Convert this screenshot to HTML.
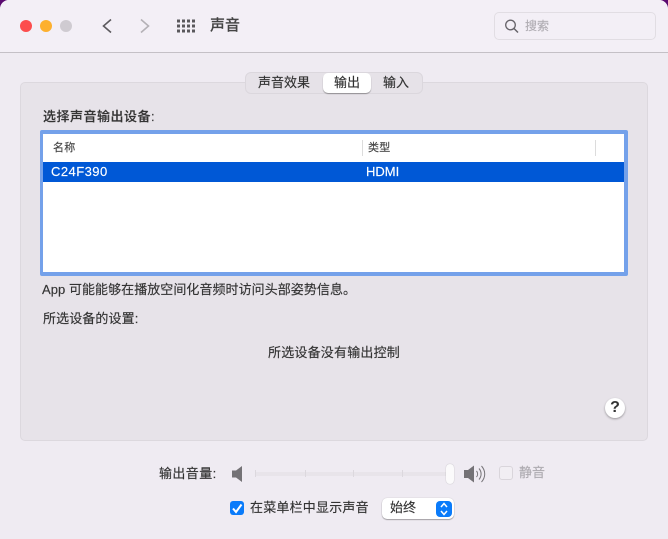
<!DOCTYPE html>
<html lang="zh"><head><meta charset="utf-8">
<style>
html,body{margin:0;padding:0;width:668px;height:539px;overflow:hidden;background:#5a0a70}
body{position:relative;font-family:"Liberation Sans","Noto Sans CJK SC",sans-serif;color:#2a2a2a}
#win{position:absolute;left:0;top:0;width:668px;height:539px;background:#efebf2;border-radius:9px 9px 0 0;overflow:hidden}
.t{position:absolute;white-space:nowrap;font-size:13px;line-height:18px;letter-spacing:.2px;-webkit-text-stroke:.15px currentColor}
#bar{position:absolute;left:0;top:0;width:668px;height:52px;background:#f3eff6;border-bottom:1px solid #c4c0c6}
.dot{position:absolute;top:20px;width:12px;height:12px;border-radius:50%}
#panel{position:absolute;left:20px;top:82px;width:626px;height:357px;background:#e7e3e9;border:1px solid #dcd8de;border-radius:5px}
#tabs{position:absolute;left:245px;top:72px;width:176px;height:20px;background:#e6e2e8;border:1px solid #dbd7dd;border-radius:6px}
#tabon{position:absolute;left:323px;top:73px;width:48px;height:20px;background:#fff;border-radius:5px;box-shadow:0 1px 1px rgba(0,0,0,.35)}
#list{position:absolute;left:40px;top:130px;width:581px;height:138px;background:#fff;border-style:solid;border-color:#74a1ea;border-radius:2px;border-width:4px 4px 4px 3px}
#row{position:absolute;left:43px;top:162px;width:581px;height:20px;background:#0058d6}
.sep{position:absolute;top:140px;width:1px;height:16px;background:#dcdcdc}
#help{position:absolute;left:605px;top:398px;width:20px;height:20px;background:#fff;border-radius:50%;box-shadow:0 1px 2px rgba(0,0,0,.35);text-align:center;font-size:16px;line-height:20px;font-weight:bold;color:#333}
#track{position:absolute;left:255px;top:472px;width:195px;height:4px;background:#e8e4ea;border-radius:2px}
.tick{position:absolute;top:470px;width:1px;height:7px;background:#dcd8de}
#knob{position:absolute;left:446px;top:464px;width:8px;height:20px;background:#fbfafb;border-radius:4px;box-shadow:0 0 1px rgba(0,0,0,.3)}
#mute{position:absolute;left:499px;top:466px;width:12px;height:12px;background:#f1eef3;border:1px solid #d9d5db;border-radius:3px}
#chk{position:absolute;left:230px;top:501px;width:14px;height:14px;background:#0a7bfa;border-radius:3px}
#sel{position:absolute;left:382px;top:498px;width:72px;height:21px;background:#fff;border-radius:5px;box-shadow:0 1px 1px rgba(0,0,0,.3),0 0 1px rgba(0,0,0,.25)}
#selb{position:absolute;left:436px;top:501px;width:16px;height:16px;background:#0a7bfa;border-radius:4px}
#search{position:absolute;left:494px;top:12px;width:160px;height:26px;border:1px solid #e1dde3;border-radius:5px}
svg{position:absolute;overflow:visible}
</style></head><body>
<div id="win">
<div id="bar"></div>
<div class="dot" style="left:20px;background:#fc4d4d;border:0"></div>
<div class="dot" style="left:40px;background:#fdb02e"></div>
<div class="dot" style="left:60px;background:#cfcbd1"></div>
<svg style="left:0;top:0" width="240" height="52" fill="none">
<path d="M111 19.500L103.500 26L111 32.500" stroke="#5c5a5e" stroke-width="1.600"/>
<path d="M141 19.500L148.500 26L141 32.500" stroke="#b4b1b6" stroke-width="1.600"/>
<g fill="#5a585c">
<rect x="177" y="19.500" width="3" height="3"/><rect x="182" y="19.500" width="3" height="3"/><rect x="187" y="19.500" width="3" height="3"/><rect x="192" y="19.500" width="3" height="3"/>
<rect x="177" y="24.500" width="3" height="3"/><rect x="182" y="24.500" width="3" height="3"/><rect x="187" y="24.500" width="3" height="3"/><rect x="192" y="24.500" width="3" height="3"/>
<rect x="177" y="29.500" width="3" height="3"/><rect x="182" y="29.500" width="3" height="3"/><rect x="187" y="29.500" width="3" height="3"/><rect x="192" y="29.500" width="3" height="3"/>
</g></svg>
<div class="t" style="left:210px;top:16px;font-size:15px;line-height:20px;font-weight:500;color:#444;letter-spacing:0">声音</div>
<div id="search"></div>
<svg style="left:0;top:0" width="668" height="52" fill="none"><circle cx="510.500" cy="25" r="4.800" stroke="#67646a" stroke-width="1.300"/><path d="M514 28.500L518 32.500" stroke="#67646a" stroke-width="1.500"/></svg>
<div class="t" style="left:525px;top:17px;color:#b0adb3;font-size:12px;letter-spacing:0">搜索</div>

<div id="panel"></div>
<div id="tabs"></div>
<div id="tabon"></div>
<div class="t" style="left:258px;top:74px;color:#333;letter-spacing:0">声音效果</div>
<div class="t" style="left:334px;top:74px;color:#333;letter-spacing:0">输出</div>
<div class="t" style="left:383px;top:74px;color:#333;letter-spacing:0">输入</div>

<div class="t" style="left:43px;top:108px;font-weight:500;letter-spacing:.5px;color:#333">选择声音输出设备:</div>
<div id="list"></div>
<div class="t" style="left:53px;top:139px;font-size:11px;color:#444">名称</div>
<div class="t" style="left:368px;top:139px;font-size:11px;color:#444">类型</div>
<div class="sep" style="left:362px"></div>
<div class="sep" style="left:595px"></div>
<div id="row"></div>
<div class="t" style="left:51px;top:163px;color:#fff;letter-spacing:.45px">C24F390</div>
<div class="t" style="left:366px;top:163px;color:#fff;letter-spacing:0">HDMI</div>

<div class="t" style="left:42px;top:281px;color:#333;letter-spacing:.05px">App 可能能够在播放空间化音频时访问头部姿势信息。</div>
<div class="t" style="left:43px;top:310px;color:#333;letter-spacing:.1px">所选设备的设置:</div>
<div class="t" style="left:268px;top:344px;color:#333">所选设备没有输出控制</div>
<div id="help">?</div>

<div class="t" style="left:159px;top:465px;color:#333;letter-spacing:.4px">输出音量:</div>
<svg style="left:0;top:0" width="668" height="539" fill="none">
<path d="M232 470.500H236L242 466V482L236 477.500H232Z" fill="#747276"/>
<path d="M464 470H468L474 465.500V482.500L468 478H464Z" fill="#747276"/>
<path d="M476.500 471C478 472.800 478 475.200 476.500 477M479 468.500C481.800 471.800 481.800 476.200 479 479.500M481.500 466C485.800 470.800 485.800 477.200 481.500 482" stroke="#747276" stroke-width="1"/>
</svg>
<div id="track"></div>
<div class="tick" style="left:255px"></div>
<div class="tick" style="left:305px"></div>
<div class="tick" style="left:353px"></div>
<div class="tick" style="left:402px"></div>
<div id="knob"></div>
<div id="mute"></div>
<div class="t" style="left:519px;top:464px;color:#aeabb1;letter-spacing:0">静音</div>

<div id="chk"></div>
<svg style="left:0;top:0" width="668" height="539" fill="none"><path d="M233 508.500L236 512L241.500 504.500" stroke="#fff" stroke-width="2"/></svg>
<div class="t" style="left:250px;top:499px;color:#333">在菜单栏中显示声音</div>
<div id="sel"></div>
<div id="selb"></div>
<svg style="left:0;top:0" width="668" height="539" fill="none"><path d="M441 507L444 503.500L447 507M441 511L444 514.500L447 511" stroke="#fff" stroke-width="1.500"/></svg>
<div class="t" style="left:390px;top:499px;color:#333;letter-spacing:0">始终</div>
</div>
</body></html>
